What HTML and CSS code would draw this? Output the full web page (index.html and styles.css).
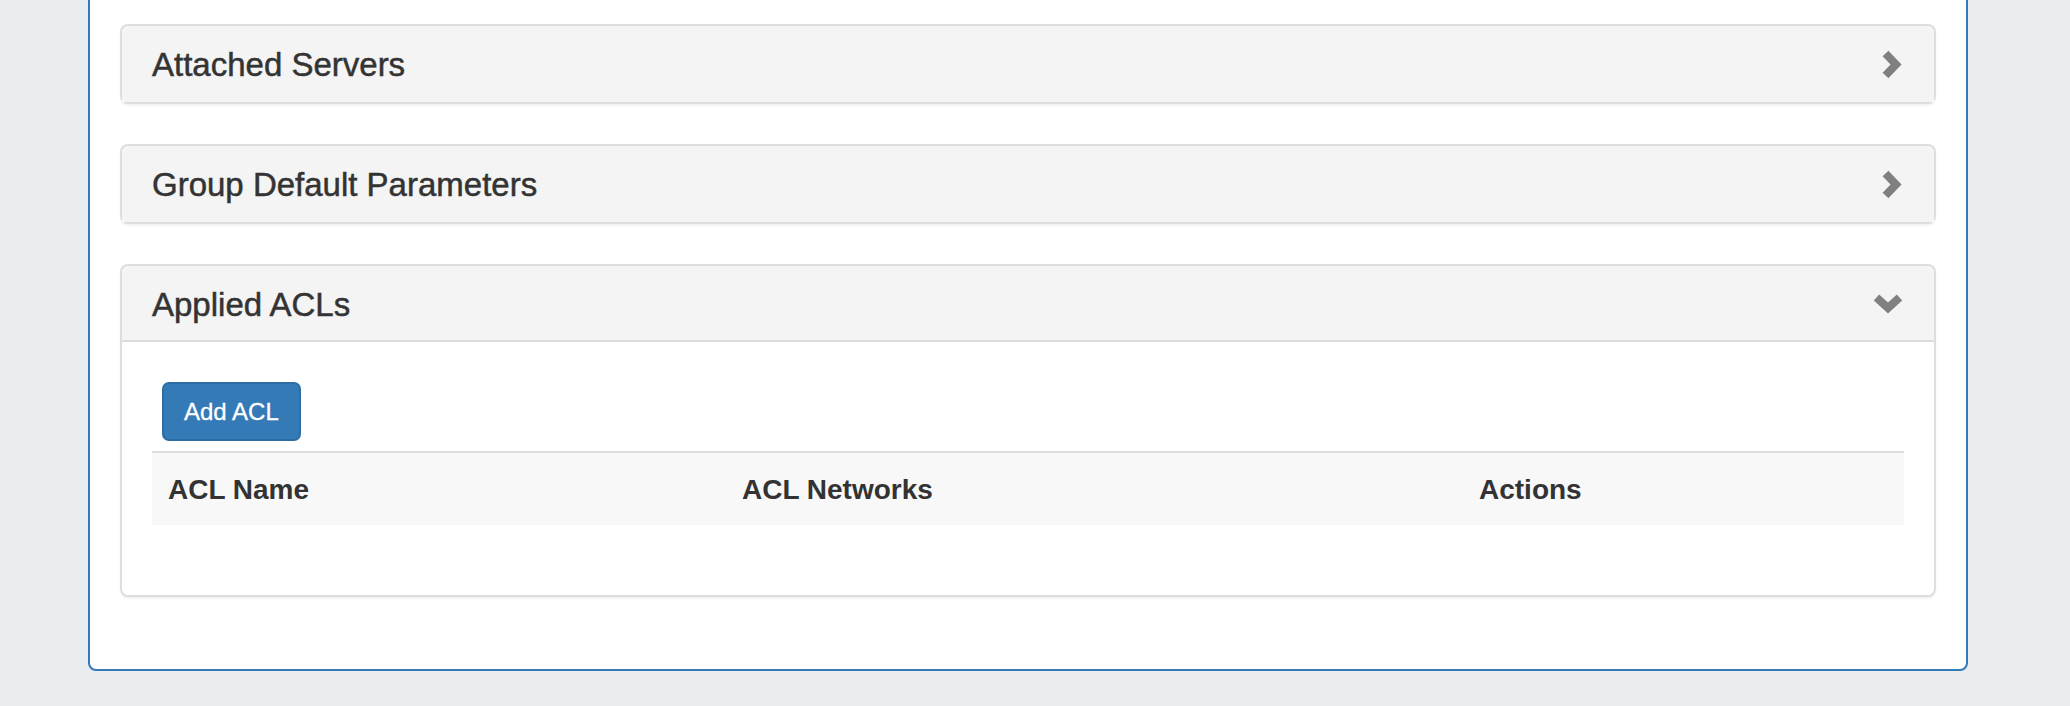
FILE: index.html
```html
<!DOCTYPE html>
<html lang="en">
<head>
<meta charset="utf-8">
<title>Group</title>
<link rel="stylesheet" href="styles.css">
</head>
<body>
<div class="page">
  <div class="container">
    <div class="panel">
      <div class="panel-heading">
        <span class="panel-title">Attached Servers</span>
        <svg class="chev chev-right" viewBox="0 0 21 29" width="21" height="29"><polyline points="4.5,3.5 15,14.5 4.5,25.5" /></svg>
      </div>
    </div>
    <div class="panel">
      <div class="panel-heading">
        <span class="panel-title">Group Default Parameters</span>
        <svg class="chev chev-right" viewBox="0 0 21 29" width="21" height="29"><polyline points="4.5,3.5 15,14.5 4.5,25.5" /></svg>
      </div>
    </div>
    <div class="panel">
      <div class="panel-heading open">
        <span class="panel-title">Applied ACLs</span>
        <svg class="chev chev-down" viewBox="0 0 30 21" width="30" height="21"><polyline points="3.5,4.5 15,15 26.5,4.5" /></svg>
      </div>
      <div class="panel-body">
        <button class="btn">Add ACL</button>
        <table class="table">
          <colgroup>
            <col class="c1"><col class="c2"><col class="c3">
          </colgroup>
          <thead>
            <tr><th>ACL Name</th><th>ACL Networks</th><th>Actions</th></tr>
          </thead>
        </table>
      </div>
    </div>
  </div>
</div>
</body>
</html>
```
FILE: styles.css
```css
html, body {
  margin: 0;
  padding: 0;
}
body {
  background: #e9edf0;
  font-family: "Liberation Sans", Arial, Helvetica, sans-serif;
  color: #333;
  overflow: hidden;
}
.page {
  margin: -30px 102px 0 88px;
}
.container {
  background: #fff;
  border: 2px solid #337ab7;
  border-radius: 8px;
  padding: 52px 30px 32px 30px;
}
.panel {
  border: 2px solid #ddd;
  border-radius: 8px;
  background: #fff;
  margin-bottom: 40px;
  box-shadow: 0 2px 2px rgba(0, 0, 0, 0.05);
}
.panel-heading {
  display: flex;
  align-items: center;
  justify-content: space-between;
  background: #f4f4f4;
  padding: 22px 30px 18px 30px;
  border-bottom: 2px solid transparent;
  border-radius: 6px 6px 0 0;
  height: 34px;
}
.panel-heading.open {
  border-bottom-color: #ddd;
}
.panel-title {
  font-size: 33px;
  line-height: 34px;
  color: #333;
  -webkit-text-stroke: 0.5px #333;
}
.chev {
  display: block;
  fill: none;
  stroke: #808080;
  stroke-width: 8;
  stroke-linecap: butt;
  stroke-linejoin: miter;
}
.chev-right {
  margin-top: -2px;
  margin-right: 2px;
}
.chev-down {
  margin-top: -4px;
  margin-right: 1px;
}
.panel-body {
  padding: 30px 30px 30px 30px;
}
.btn {
  display: block;
  margin: 10px 0 0 10px;
  background: #337ab7;
  border: 2px solid #2e6da4;
  border-radius: 7px;
  color: #fff;
  font-family: "Liberation Sans", Arial, Helvetica, sans-serif;
  font-size: 24px;
  line-height: 35px;
  padding: 10px 20px;
  -webkit-text-stroke: 0.3px #fff;
}
.table {
  width: 100%;
  border-collapse: separate;
  border-spacing: 0;
  margin: 10px 0 40px 0;
}
.table col.c1 { width: 574px; }
.table col.c2 { width: 737px; }
.table col.c3 { width: 441px; }
.table th {
  text-align: left;
  font-size: 28px;
  font-weight: bold;
  line-height: 40px;
  padding: 17px 16px 15px 16px;
  background: #f8f8f8;
  border-top: 2px solid #ddd;
}
```
